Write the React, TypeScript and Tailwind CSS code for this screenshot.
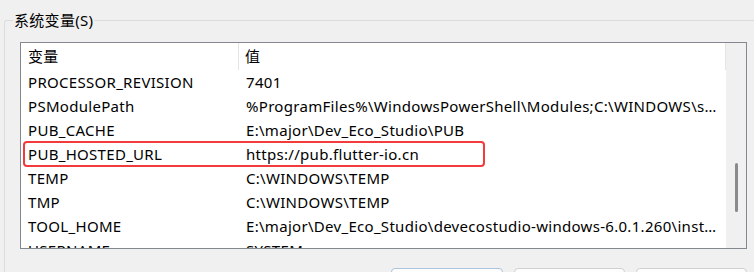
const rows: [string, string][] = [
  ['PROCESSOR_REVISION', '7401'],
  ['PSModulePath', '%ProgramFiles%\\WindowsPowerShell\\Modules;C:\\WINDOWS\\system32\\WindowsPowerShell\\v1.0\\Modules'],
  ['PUB_CACHE', 'E:\\major\\Dev_Eco_Studio\\PUB'],
  ['PUB_HOSTED_URL', 'https://pub.flutter-io.cn'],
  ['TEMP', 'C:\\WINDOWS\\TEMP'],
  ['TMP', 'C:\\WINDOWS\\TEMP'],
  ['TOOL_HOME', 'E:\\major\\Dev_Eco_Studio\\devecostudio-windows-6.0.1.260\\installation'],
  ['USERNAME', 'SYSTEM'],
]

export default function App() {
  return (
    <div
      className="w-[754px] h-[272px] overflow-hidden bg-[#f0f0f0] text-[15px] tracking-[0.3px] text-black"
      style={{ fontFamily: '"Noto Sans", "Noto Sans CJK SC", sans-serif' }}
    >
      {/* System variables group */}
      <div className="relative mt-[20px] ml-[4px] w-[800px] h-[300px] border-l border-t border-[#dcdcdc] rounded-tl-[3px] pl-[15px] pt-[21px]">
        <span className="absolute left-[8px] -top-[11px] px-[1px] bg-[#f0f0f0] leading-[20px]">系统变量(S)</span>

        {/* List view */}
        <div className="w-[727px] h-[207px] border border-[#828790] bg-white flex overflow-hidden">
          <div className="flex-1 flex flex-col min-w-0">
            {/* Header */}
            <div className="h-[27px] shrink-0 flex items-center">
              <div className="w-[218px] h-full pl-[7px] flex items-center border-r border-[#e5e5e5]">变量</div>
              <div className="flex-1 h-full pl-[6px] flex items-center border-r border-[#e5e5e5]">值</div>
            </div>
            {rows.map(([name, value]) => (
              <div key={name} className="relative h-[24px] shrink-0 flex items-center">
                <div className="w-[218px] pl-[7px] whitespace-nowrap">{name}</div>
                <div className="flex-1 min-w-0 pl-[7px] pr-[8px] truncate">{value}</div>
                {name === 'PUB_HOSTED_URL' && (
                  <div className="absolute left-[2px] -top-[1px] w-[462px] h-[26px] border-2 border-[#f23c3c] rounded-[4px]" />
                )}
              </div>
            ))}
          </div>
          {/* Scrollbar */}
          <div className="w-[20px] shrink-0 bg-[#f0f0f0] relative">
            <div className="absolute left-[9px] top-[120px] w-[3px] h-[49px] rounded-full bg-[#8a8a8a]" />
          </div>
        </div>

        {/* Buttons */}
        <div className="w-[727px] mt-[19px] flex justify-end gap-[11px]">
          <div className="w-[112px] h-[30px] rounded-[4px] border border-[#a9c4dd] bg-[#fdfdfd]" />
          <div className="w-[111px] h-[30px] rounded-[4px] border border-[#d0d0d0] bg-[#fdfdfd]" />
          <div className="w-[111px] h-[30px] rounded-[4px] border border-[#d0d0d0] bg-[#fdfdfd]" />
        </div>
      </div>
    </div>
  )
}
